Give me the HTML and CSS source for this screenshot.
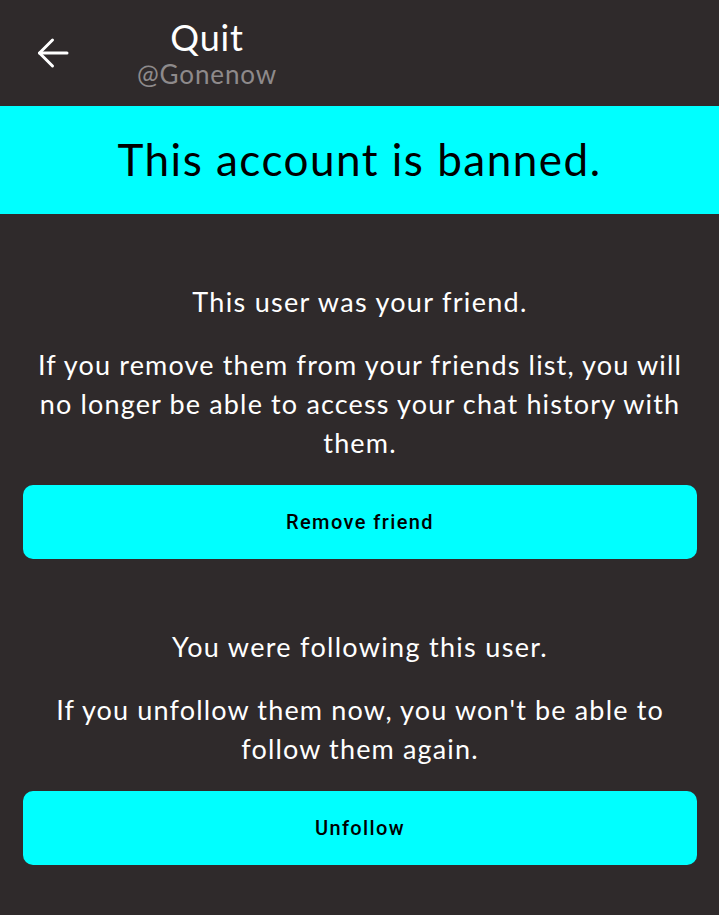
FILE: index.html
```html
<!DOCTYPE html>
<html>
<head>
<meta charset="utf-8">
<link rel="stylesheet" href="styles.css">
</head>
<body>
<div class="page">
  <header class="topbar">
    <button class="back" aria-label="Back">
      <svg width="32" height="32" viewBox="0 0 32 32" fill="none" stroke="#ffffff" stroke-width="3" stroke-linecap="round" stroke-linejoin="round">
        <path d="M30 16 H2.5"/>
        <path d="M15.5 3 L2.5 16 L15.5 29"/>
      </svg>
    </button>
    <div class="title">
      <div class="name">Quit</div>
      <div class="handle">@Gonenow</div>
    </div>
  </header>
  <div class="banner">This account is banned.</div>
  <main class="content">
    <section class="block">
      <p class="lead">This user was your friend.</p>
      <p class="desc">If you remove them from your friends list, you will no longer be able to access your chat history with them.</p>
      <button class="action">Remove friend</button>
    </section>
    <section class="block">
      <p class="lead">You were following this user.</p>
      <p class="desc">If you unfollow them now, you won't be able to follow them again.</p>
      <button class="action">Unfollow</button>
    </section>
  </main>
</div>
</body>
</html>
```
FILE: styles.css
```css
html, body {
  margin: 0;
  padding: 0;
  background: #2f2a2b;
}
body {
  font-family: Lato, "Open Sans", sans-serif;
  color: #ffffff;
  width: 719px;
  height: 915px;
  overflow: hidden;
}
.page {
  display: flex;
  flex-direction: column;
}
.topbar {
  height: 106px;
  display: flex;
  align-items: flex-start;
}
.back {
  background: none;
  border: none;
  padding: 0;
  margin: 37px 0 0 37px;
  width: 32px;
  height: 32px;
  display: flex;
}
.title {
  margin-left: 67px;
  margin-top: 16px;
  width: 142px;
  text-align: center;
}
.name {
  font-size: 36px;
  line-height: 42px;
  letter-spacing: 0.8px;
  color: #ffffff;
}
.handle {
  font-size: 26px;
  line-height: 32px;
  color: #8e8a8b;
  letter-spacing: 0.9px;
}
.banner {
  height: 108px;
  background: #00ffff;
  color: #000000;
  font-size: 44px;
  letter-spacing: 1.5px;
  display: flex;
  align-items: center;
  justify-content: center;
  padding-bottom: 2px;
  box-sizing: border-box;
}
.content {
  padding: 0 22px 0 23px;
  display: flex;
  flex-direction: column;
}
.block {
  display: flex;
  flex-direction: column;
  align-items: stretch;
  text-align: center;
}
.block:first-child {
  margin-top: 68px;
}
.block + .block {
  margin-top: 68px;
}
.lead {
  margin: 0;
  font-size: 27px;
  line-height: 40px;
  letter-spacing: 1.3px;
}
.desc {
  margin: 23px 8px 0;
  font-size: 27px;
  line-height: 39px;
  letter-spacing: 1.15px;
}
.action {
  margin-top: 23px;
  height: 74px;
  border: none;
  border-radius: 10px;
  background: #00ffff;
  color: #000000;
  font-family: Roboto, "Liberation Sans", sans-serif;
  font-weight: 500;
  font-size: 20px;
  letter-spacing: 1.4px;
}
```
